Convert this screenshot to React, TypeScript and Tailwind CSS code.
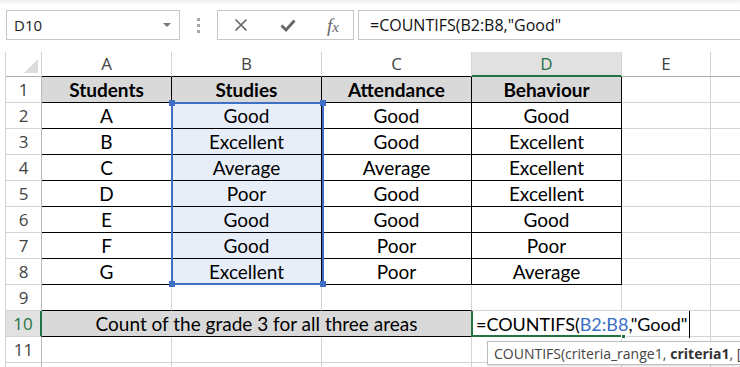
import React from "react";

const rows = [
  ["Students", "Studies", "Attendance", "Behaviour"],
  ["A", "Good", "Good", "Good"],
  ["B", "Excellent", "Good", "Excellent"],
  ["C", "Average", "Average", "Excellent"],
  ["D", "Poor", "Good", "Excellent"],
  ["E", "Good", "Good", "Good"],
  ["F", "Good", "Poor", "Poor"],
  ["G", "Excellent", "Poor", "Average"],
];

const colW = ["w-[130px]", "w-[150px]", "w-[150px]", "w-[150px]"];

function RowHead({ n, active }: { n: number; active?: boolean }) {
  return (
    <div
      className={
        active
          ? "w-[36px] shrink-0 flex items-center justify-center border-b border-b-[#d4d4d4] border-r-2 border-r-[#217346] bg-[#e1e1e1] text-[#217346]"
          : "w-[36px] shrink-0 flex items-center justify-center border-b border-b-[#d4d4d4] border-r border-r-[#b8b8b8] text-[#444]"
      }
    >
      <span className="text-[17px] font-['Open_Sans',sans-serif] leading-none">{n}</span>
    </div>
  );
}

function Filler() {
  return (
    <>
      <div className="w-[89px] shrink-0 border-r border-b border-[#d4d4d4]" />
      <div className="flex-1 border-b border-[#d4d4d4]" />
    </>
  );
}

export default function App() {
  return (
    <div className="relative w-[740px] h-[367px] overflow-hidden bg-white font-['Open_Sans',sans-serif]">
      {/* toolbar */}
      <div className="h-[52px] bg-gradient-to-b from-[#eeeeee] via-white via-[4px] to-white">
        <div className="flex pt-[10px]">
          <div className="ml-[6px] w-[174px] h-[30px] border border-[#c6c6c6] bg-white flex items-center pl-[7px] pr-[8px]">
            <span className="text-[15px] text-[#222] flex-1">D10</span>
            <span className="w-0 h-0 border-l-[4px] border-r-[4px] border-t-[4px] border-l-transparent border-r-transparent border-t-[#777]" />
          </div>
          <div className="w-[37px] flex flex-col items-center justify-center gap-[3px]">
            <span className="w-[3px] h-[3px] bg-[#a8a8a8]" />
            <span className="w-[3px] h-[3px] bg-[#a8a8a8]" />
            <span className="w-[3px] h-[3px] bg-[#a8a8a8]" />
          </div>
          <div className="w-[137px] h-[30px] border border-[#c6c6c6] bg-white flex items-center justify-between pl-[16px] pr-[14px]">
            <svg width="14" height="14" viewBox="0 0 14 14">
              <path d="M1.5 1.5 L12.5 12.5 M12.5 1.5 L1.5 12.5" stroke="#666" strokeWidth="1.7" fill="none" />
            </svg>
            <svg width="16" height="13" viewBox="0 0 16 13">
              <path d="M1.5 6.5 L6 11 L14.5 1.5" stroke="#666" strokeWidth="2.8" fill="none" />
            </svg>
            <span className="font-['Liberation_Serif',serif] italic text-[19px] text-[#666] leading-none">
              f<span className="text-[15px]">x</span>
            </span>
          </div>
          <div className="ml-[4px] flex-1 h-[30px] border border-r-0 border-[#c6c6c6] bg-white flex items-center pl-[11px]">
            <span className="text-[16px] text-[#111] whitespace-nowrap">=COUNTIFS(B2:B8,"Good"</span>
          </div>
        </div>
      </div>

      {/* sheet */}
      <div className="relative ml-[5px] border-l border-[#d4d4d4] font-['Lato',sans-serif] text-[19px] text-black">
        {/* column headers */}
        <div className="flex h-[25px] font-['Open_Sans',sans-serif] text-[17px] text-[#444]">
          <div className="w-[36px] shrink-0 border-r border-r-[#d4d4d4] border-b border-b-[#ababab] flex items-end justify-end p-[3px]">
            <svg width="14" height="14" viewBox="0 0 14 14">
              <path d="M14 0 L14 14 L0 14 Z" fill="#dcdcdc" />
            </svg>
          </div>
          <div className="w-[130px] shrink-0 border-r border-r-[#d4d4d4] border-b border-b-black flex items-center justify-center">A</div>
          <div className="w-[150px] shrink-0 border-r border-r-[#d4d4d4] border-b border-b-black flex items-center justify-center">B</div>
          <div className="w-[150px] shrink-0 border-r border-r-[#d4d4d4] border-b border-b-black flex items-center justify-center">C</div>
          <div className="w-[150px] shrink-0 border-r border-r-[#d4d4d4] border-b-2 border-b-[#217346] bg-[#e1e1e1] text-[#217346] flex items-center justify-center">D</div>
          <div className="w-[89px] shrink-0 border-r border-r-[#d4d4d4] border-b border-b-[#ababab] flex items-center justify-center">E</div>
          <div className="flex-1 border-b border-b-[#ababab]" />
        </div>

        {/* table rows 1-8 */}
        {rows.map((r, i) => (
          <div key={i} className="flex h-[26px]">
            <RowHead n={i + 1} />
            {r.map((v, j) => (
              <div
                key={j}
                className={`${colW[j]} shrink-0 border-r border-b border-black flex items-center justify-center pt-[2px] ${
                  i === 0 ? "bg-[#d9d9d9] font-bold" : j === 1 ? "bg-[#e8eef8]" : ""
                }`}
              >
                {v}
              </div>
            ))}
            <Filler />
          </div>
        ))}

        {/* row 9 */}
        <div className="flex h-[26px]">
          <RowHead n={9} />
          <div className="w-[130px] shrink-0 border-r border-r-[#d4d4d4] border-b border-b-black" />
          <div className="w-[150px] shrink-0 border-r border-r-[#d4d4d4] border-b border-b-black" />
          <div className="w-[150px] shrink-0 border-r border-r-[#d4d4d4] border-b border-b-black" />
          <div className="w-[150px] shrink-0 border-r border-b border-[#d4d4d4]" />
          <Filler />
        </div>

        {/* row 10 */}
        <div className="flex h-[26px]">
          <RowHead n={10} active />
          <div className="w-[429px] shrink-0 border-b border-black bg-[#d9d9d9] flex items-center justify-center pt-[2px]">
            Count of the grade 3 for all three areas
          </div>
          <div className="relative z-10 w-[151px] shrink-0 border-l-2 border-l-[#217346] border-b-2 border-b-[#217346] flex items-center pl-[3px] pt-[2px] whitespace-nowrap text-[18px]">
            <span>=COUNTIFS(</span>
            <span className="text-[#3b6fc5]">B2:B8</span>
            <span className="border-r border-black pr-[1px]">,"Good"</span>
            <span className="absolute right-[-4px] bottom-[-4px] w-[5px] h-[5px] bg-[#217346] border border-white" />
          </div>
          <div className="w-[89px] shrink-0 border-r border-b border-[#d4d4d4]" />
          <div className="flex-1 border-b border-[#d4d4d4]" />
        </div>

        {/* row 11 */}
        <div className="flex h-[26px]">
          <RowHead n={11} />
          <div className="w-[130px] shrink-0 border-r border-b border-[#d4d4d4]" />
          <div className="w-[150px] shrink-0 border-r border-b border-[#d4d4d4]" />
          <div className="w-[150px] shrink-0 border-r border-b border-[#d4d4d4]" />
          <div className="w-[150px] shrink-0 border-r border-b border-[#d4d4d4]" />
          <Filler />
        </div>
        <div className="flex h-[26px]">
          <div className="w-[36px] shrink-0 border-r border-r-[#b8b8b8]" />
          <div className="w-[130px] shrink-0 border-r border-[#d4d4d4]" />
          <div className="w-[150px] shrink-0 border-r border-[#d4d4d4]" />
          <div className="w-[150px] shrink-0 border-r border-[#d4d4d4]" />
          <div className="w-[150px] shrink-0 border-r border-[#d4d4d4]" />
          <div className="w-[89px] shrink-0 border-r border-[#d4d4d4]" />
        </div>

        {/* selected range B2:B8 */}
        <div className="absolute left-[165px] top-[50px] w-[153px] h-[183px] border-2 border-[#3f6fc4] pointer-events-none">
          <span className="absolute -left-[4px] -top-[4px] w-[6px] h-[6px] bg-[#3f6fc4]" />
          <span className="absolute -right-[4px] -top-[4px] w-[6px] h-[6px] bg-[#3f6fc4]" />
          <span className="absolute -left-[4px] -bottom-[4px] w-[6px] h-[6px] bg-[#3f6fc4]" />
          <span className="absolute -right-[4px] -bottom-[4px] w-[6px] h-[6px] bg-[#3f6fc4]" />
        </div>
      </div>

      {/* function tooltip */}
      <div className="absolute left-[487px] top-[341px] w-[300px] h-[24px] border border-[#bdbdbd] bg-white shadow-[1px_1px_2px_rgba(0,0,0,0.15)] flex items-center pl-[6px] text-[14px] text-[#444] whitespace-nowrap z-20">
        COUNTIFS(criteria_range1, <span className="font-bold text-[#333] ml-[4px]">criteria1</span>, [
      </div>
    </div>
  );
}
